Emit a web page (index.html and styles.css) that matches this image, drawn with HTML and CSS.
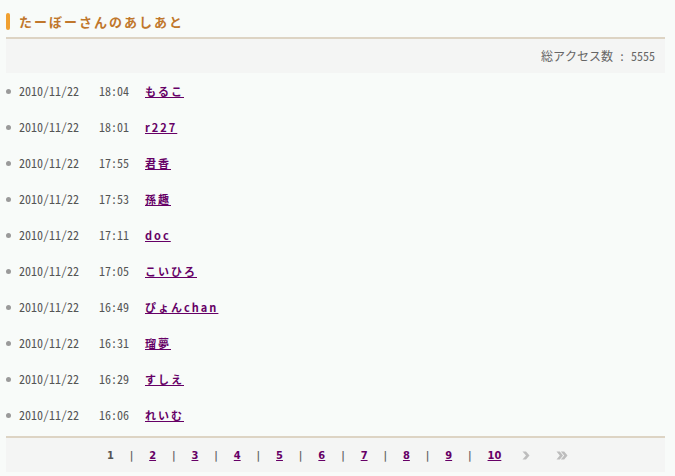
FILE: index.html
```html
<!DOCTYPE html>
<html lang="ja">
<head>
<meta charset="utf-8">
<title>たーぼーさんのあしあと</title>
<link rel="stylesheet" href="styles.css">
</head>
<body>
<div class="wrap">
  <h1 class="title"><span class="title-bar"></span>たーぼーさんのあしあと</h1>
  <div class="count">総アクセス数 : 5555</div>
  <ul class="list">
    <li class="row"><span class="dot"></span><span class="date">2010/11/22</span><span class="time">18:04</span><a class="name" href="#">もるこ</a></li>
    <li class="row"><span class="dot"></span><span class="date">2010/11/22</span><span class="time">18:01</span><a class="name" href="#">r227</a></li>
    <li class="row"><span class="dot"></span><span class="date">2010/11/22</span><span class="time">17:55</span><a class="name" href="#">君香</a></li>
    <li class="row"><span class="dot"></span><span class="date">2010/11/22</span><span class="time">17:53</span><a class="name" href="#">孫趣</a></li>
    <li class="row"><span class="dot"></span><span class="date">2010/11/22</span><span class="time">17:11</span><a class="name" href="#">doc</a></li>
    <li class="row"><span class="dot"></span><span class="date">2010/11/22</span><span class="time">17:05</span><a class="name" href="#">こいひろ</a></li>
    <li class="row"><span class="dot"></span><span class="date">2010/11/22</span><span class="time">16:49</span><a class="name" href="#">ぴょんchan</a></li>
    <li class="row"><span class="dot"></span><span class="date">2010/11/22</span><span class="time">16:31</span><a class="name" href="#">瑠夢</a></li>
    <li class="row"><span class="dot"></span><span class="date">2010/11/22</span><span class="time">16:29</span><a class="name" href="#">すしえ</a></li>
    <li class="row"><span class="dot"></span><span class="date">2010/11/22</span><span class="time">16:06</span><a class="name" href="#">れいむ</a></li>
  </ul>
  <div class="pager">
    <span class="pg current">1</span><span class="sep">|</span>
    <a class="pg" href="#">2</a><span class="sep">|</span>
    <a class="pg" href="#">3</a><span class="sep">|</span>
    <a class="pg" href="#">4</a><span class="sep">|</span>
    <a class="pg" href="#">5</a><span class="sep">|</span>
    <a class="pg" href="#">6</a><span class="sep">|</span>
    <a class="pg" href="#">7</a><span class="sep">|</span>
    <a class="pg" href="#">8</a><span class="sep">|</span>
    <a class="pg" href="#">9</a><span class="sep">|</span>
    <a class="pg" href="#">10</a>
    <span class="arrow next"><svg width="8" height="9" viewBox="0 0 8 9"><path d="M0.5 0.5 L4 0.5 L7.5 4.5 L4 8.5 L0.5 8.5 L4 4.5 Z" fill="#bdbdbd"/></svg></span>
    <span class="arrow last"><svg width="12" height="9" viewBox="0 0 12 9"><path d="M0.5 0.5 L3.8 0.5 L7 4.5 L3.8 8.5 L0.5 8.5 L3.8 4.5 Z" fill="#bdbdbd"/><path d="M4.8 0.5 L8.2 0.5 L11.5 4.5 L8.2 8.5 L4.8 8.5 L8.2 4.5 Z" fill="#bdbdbd"/></svg></span>
  </div>
</div>
</body>
</html>
```
FILE: styles.css
```css
html, body {
  margin: 0;
  padding: 0;
  background: #f8fbf9;
}
.wrap {
  margin-left: 6px;
  width: 659px;
}
.title {
  margin: 0;
  height: 39px;
  box-sizing: border-box;
  padding-top: 13px;
  display: flex;
  align-items: flex-start;
  border-bottom: 2px solid #ddd4c4;
  font-family: "Noto Sans CJK JP", sans-serif;
  font-size: 13px;
  font-weight: bold;
  letter-spacing: 2px;
  color: #c0772c;
  line-height: 17px;
}
.title-bar {
  display: block;
  width: 4px;
  height: 17px;
  border-radius: 2px;
  background: #f0a030;
  margin-right: 9px;
}
.count {
  height: 34px;
  background: #f4f5f4;
  text-align: right;
  padding-right: 10px;
  font-family: "Noto Sans Mono CJK JP", "Noto Sans CJK JP", monospace;
  font-size: 12px;
  line-height: 34px;
  color: #666;
}
.list {
  list-style: none;
  margin: 0;
  padding: 0;
}
.row {
  height: 36px;
  display: flex;
  align-items: center;
}
.dot {
  width: 5px;
  height: 5px;
  border-radius: 50%;
  background: #9a9a9a;
  margin-right: 8px;
}
.date, .time {
  font-family: "Noto Sans Mono CJK JP", "Liberation Mono", monospace;
  font-size: 12px;
  line-height: 14px;
  color: #555;
}
.date {
  width: 80px;
}
.time {
  width: 46px;
}
.name {
  font-family: "Noto Sans CJK JP", sans-serif;
  font-size: 11px;
  font-weight: bold;
  letter-spacing: 2px;
  color: #660066;
  text-decoration: underline;
}
.pager {
  margin-top: 3px;
  border-top: 2px solid #ddd4c4;
  height: 34px;
  background: #f4f5f4;
  display: flex;
  align-items: center;
  justify-content: center;
  gap: 15.9px;
  font-family: "DejaVu Sans Condensed", "Liberation Sans", sans-serif;
  font-size: 11px;
  font-weight: bold;
  padding-left: 4px;
}
.pg {
  color: #660066;
  text-decoration: underline;
}
.pg.current {
  color: #555;
  text-decoration: none;
}
.sep {
  color: #666;
}
.arrow {
  display: flex;
  align-items: center;
}
.arrow.next {
  margin-left: 5px;
}
.arrow.last {
  margin-left: 10px;
}
```
